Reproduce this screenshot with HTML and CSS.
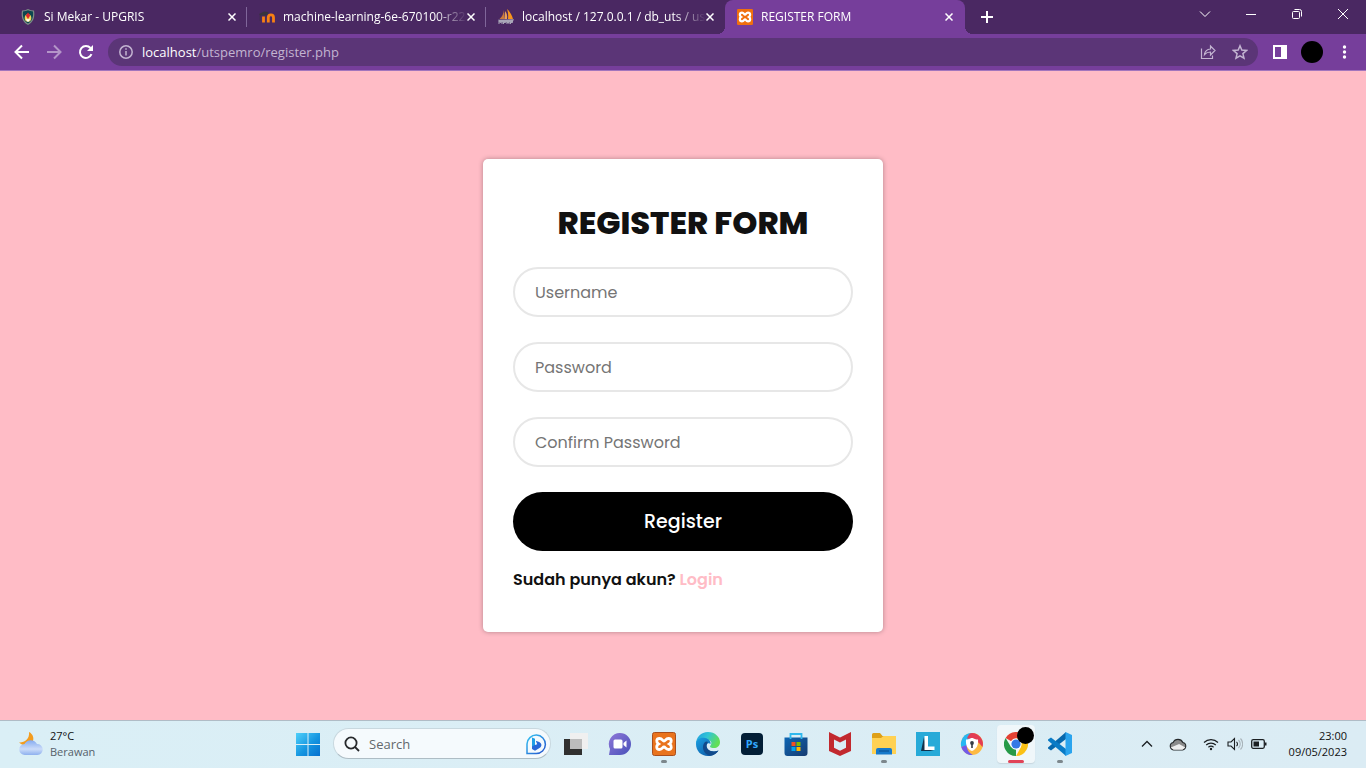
FILE: index.html
```html
<!DOCTYPE html>
<html lang="id">
<head>
<meta charset="utf-8">
<meta name="viewport" content="width=device-width, initial-scale=1">
<title>REGISTER FORM</title>
<link rel="stylesheet" href="styles.css">
</head>
<body>
<header class="browser">
  <div class="tab-strip">
    <div class="tab">
      <svg class="favicon" viewBox="0 0 16 16"><path d="M8 0C10 1 12 1.500 14 1.500 15 7 14 13 8 16 2 13 1 7 2 1.500 4 1.500 6 1 8 0z" fill="#7d8c86"/><path d="M8 1.300c2 .8 3.500 1.100 5 1.200.5 5-.5 9.500-5 12-4.500-2.500-5.500-7-5-12 1.500-.1 3-.4 5-1.200z" fill="#0d4650"/><ellipse cx="8" cy="9" rx="3.300" ry="3.800" fill="#f0d65a"/><path d="M8 3.500l2.200 3L8 10 5.800 6.500z" fill="#e0262b"/><path d="M6 9.500l2 1 2-1-1 3H7z" fill="#fff"/></svg>
      <span class="tab-title">Si Mekar - UPGRIS</span>
      <button class="tab-close" aria-label="Close tab"><svg viewBox="0 0 8 8"><path d="M.5.5l7 7m0-7l-7 7"/></svg></button>
    </div>
    <div class="tab">
      <svg class="favicon" viewBox="0 0 16 16"><path d="M4.500 13.500V7.500M9.300 13.500V8.500a2.600 2.600 0 015.200 0v5" fill="none" stroke="#f98012" stroke-width="2.800"/><path d="M0 5l5-2.500 4.500.5L8 6.500H1.500V12H.8V6z" fill="#38343d"/></svg>
      <span class="tab-title">machine-learning-6e-670100-r22</span>
      <button class="tab-close" aria-label="Close tab"><svg viewBox="0 0 8 8"><path d="M.5.5l7 7m0-7l-7 7"/></svg></button>
    </div>
    <div class="tab">
      <svg class="favicon" viewBox="0 0 16 16"><path d="M6 1v9H1.500C4 8 5.500 5 6 1z" fill="#c9793c"/><path d="M7 2c2 2 2.500 5 2 8H6.300z" fill="#e9a15a"/><path d="M9 0c3 2.500 5 6 6 10h-5C10.500 6 10 3 9 0z" fill="#f7941d"/><path d="M0 10.800l16-.5-1.500 3H1.500z" fill="#a9a6b8"/><path d="M1 15v-3l1.500 2L4 12v3m1.500 0v-3h2v1.500h-2M9 12v3m0-1.500h2M11 12v3m1.500 0v-3h2v1.500h-2" fill="none" stroke="#a9a6b8"/></svg>
      <span class="tab-title">localhost / 127.0.0.1 / db_uts / us</span>
      <button class="tab-close" aria-label="Close tab"><svg viewBox="0 0 8 8"><path d="M.5.5l7 7m0-7l-7 7"/></svg></button>
    </div>
    <div class="tab tab-active">
      <svg class="favicon" viewBox="0 0 24 24"><rect width="24" height="24" rx="2" fill="#f0700e"/><path d="M7.500 5.500c3 0 3 3 4.500 3s1.500-3 4.500-3c4 0 4 5 1.500 6.500 2.500 1.500 2.500 6.500-1.500 6.500-3 0-3-3-4.500-3s-1.500 3-4.500 3c-4 0-4-5-1.500-6.500-2.500-1.500-2.500-6.500 1.500-6.500z" fill="none" stroke="#fff" stroke-width="3.400"/></svg>
      <span class="tab-title">REGISTER FORM</span>
      <button class="tab-close" aria-label="Close tab"><svg viewBox="0 0 8 8"><path d="M.5.5l7 7m0-7l-7 7"/></svg></button>
    </div>
    <button class="new-tab" aria-label="New tab"><svg viewBox="0 0 12 12"><path d="M6 0v12M0 6h12"/></svg></button>
    <div class="window-controls">
      <button aria-label="Search tabs"><svg viewBox="0 0 12 12"><path d="M1 3.500l5 5 5-5"/></svg></button>
      <button aria-label="Minimize"><svg viewBox="0 0 12 12"><path d="M1 6.500h10"/></svg></button>
      <button aria-label="Restore"><svg viewBox="0 0 12 12"><rect x="1.500" y="3.500" width="7" height="7" rx="1"/><path d="M3.500 1.500h5a2 2 0 012 2v5"/></svg></button>
      <button aria-label="Close"><svg viewBox="0 0 12 12"><path d="M1 1l10 10M11 1L1 11"/></svg></button>
    </div>
  </div>
  <nav class="toolbar" aria-label="Browser toolbar">
    <button class="tool" aria-label="Back"><svg viewBox="0 0 16 16" fill="none" stroke="#fff" stroke-width="2"><path d="M15 8H2M8 1.500L1.500 8 8 14.500"/></svg></button>
    <button class="tool tool-dim" aria-label="Forward"><svg viewBox="0 0 16 16" fill="none" stroke="#fff" stroke-width="2"><path d="M1 8h13M8 1.500L14.500 8 8 14.500"/></svg></button>
    <button class="tool" aria-label="Reload"><svg viewBox="0 0 16 16" fill="none" stroke="#fff" stroke-width="2"><path d="M13.500 10.200A6 6 0 1112.500 4"/><path d="M15 1v6H9z" fill="#fff" stroke="none"/></svg></button>
    <div class="omnibox">
      <svg class="info" viewBox="0 0 14 14" fill="none" stroke="#c3b4d1" stroke-width="1.500"><circle cx="7" cy="7" r="6.200"/><path d="M7 6v4.500M7 3.300v1.500"/></svg>
      <span class="url"><span class="host">localhost</span>/utspemro/register.php</span>
      <button class="tool" aria-label="Share"><svg viewBox="0 0 16 16" fill="none" stroke="#c3b4d1" stroke-width="1.200"><path d="M1.500 4.500v10h11v-3"/><path d="M4.500 10.500C5 7 7 5.200 10.500 5V2l4.500 4.500-4.500 4.500V8C8 8 6 8.800 4.500 10.500z"/></svg></button>
      <button class="tool" aria-label="Bookmark"><svg viewBox="0 0 16 16" fill="none" stroke="#c3b4d1" stroke-width="1.500"><path d="M8 1.800l1.800 4.300 4.700.4-3.600 3.100 1.100 4.600L8 11.800l-4 2.400 1.100-4.600L1.500 6.500l4.700-.4z"/></svg></button>
    </div>
    <button class="tool" aria-label="Side panel"><svg viewBox="0 0 16 16"><path d="M1 1h14v14H1zM3 3v10h6V3z" fill="#fff" fill-rule="evenodd"/></svg></button>
    <button class="tool" aria-label="Profile"><span class="avatar"></span></button>
    <button class="tool" aria-label="Menu"><svg viewBox="0 0 16 16" fill="#fff"><circle cx="8.500" cy="3" r="1.700"/><circle cx="8.500" cy="8" r="1.700"/><circle cx="8.500" cy="13" r="1.700"/></svg></button>
  </nav>
</header>

<main class="page">
  <form class="card">
    <h1 class="card-title">REGISTER FORM</h1>
    <div class="fields">
      <input class="field" type="text" placeholder="Username" aria-label="Username">
      <input class="field" type="password" placeholder="Password" aria-label="Password">
      <input class="field" type="password" placeholder="Confirm Password" aria-label="Confirm Password">
      <button class="submit" type="button">Register</button>
    </div>
    <p class="login-line">Sudah punya akun? <a href="#login">Login</a></p>
  </form>
</main>

<footer class="taskbar">
  <div class="weather">
    <svg viewBox="0 0 26 26">
      <defs><linearGradient id="cloud" x1="0" y1="0" x2="0" y2="1"><stop offset="0" stop-color="#83aaf0"/><stop offset=".6" stop-color="#cbdcf9"/><stop offset="1" stop-color="#8eb0ee"/></linearGradient></defs>
      <path d="M11 1c4 2 5.500 6.500 3.500 10S6 16 1 11.500C6 12 12 8 11 1z" fill="#f39c1e"/>
      <path d="M7 24a5.500 5.500 0 01-.5-11A7 7 0 0119 13a5.500 5.500 0 01.5 11z" fill="url(#cloud)"/>
    </svg>
    <div class="weather-text"><span>27°C</span><span class="muted">Berawan</span></div>
  </div>

  <div class="apps">
    <button class="app" aria-label="Start"><svg viewBox="0 0 24 24"><defs><linearGradient id="win" x1="0" y1="0" x2="1" y2="1"><stop offset="0" stop-color="#4fd0fa"/><stop offset=".55" stop-color="#1595e0"/><stop offset="1" stop-color="#0670cf"/></linearGradient></defs><path d="M0 1h11.500v11H0zM12.500 1H24v11H12.500zM0 13h11.500v11H0zM12.500 13H24v11H12.500z" fill="url(#win)"/></svg></button>
    <label class="search">
      <svg class="lens" viewBox="0 0 16 16" fill="none" stroke="#26282b" stroke-width="1.800"><circle cx="7" cy="7" r="5.600"/><path d="M11 11l4 4"/></svg>
      <input type="text" placeholder="Search" aria-label="Search">
      <svg class="bing" viewBox="0 0 22 22"><defs><linearGradient id="bing" x1="0" y1="0" x2="1" y2="1"><stop offset="0" stop-color="#35c5f3"/><stop offset="1" stop-color="#2450cb"/></linearGradient></defs><path d="M2 20.500V11a9.200 9.200 0 119 9.500z" fill="none" stroke="url(#bing)" stroke-width="1.500"/><path d="M7 4.500l3 1.300v8.400L7 16z" fill="#1f9fe6"/><path d="M7 13.500l3-1.500 2.200-.8-1.400-3.400 3.400 1.300c3.200 1.700 2.600 4.700.3 6L10 17.800 7 16z" fill="#2767d8"/></svg>
    </label>
    <button class="app" aria-label="Task view"><svg viewBox="0 0 24 24"><path d="M0 7h18v16H0z" fill="#30302f"/><path d="M6 1h18v16H6z" fill="#f0f0f0"/><path d="M6 7h12v10H6z" fill="#bcbcbc"/></svg></button>
    <button class="app" aria-label="Chat"><svg viewBox="0 0 24 24"><defs><linearGradient id="chat" x1="0" y1="0" x2="1" y2="1"><stop offset="0" stop-color="#8f78d8"/><stop offset="1" stop-color="#4850b9"/></linearGradient></defs><path d="M12 1a11 11 0 010 22H1l1-6A11 11 0 0112 1z" fill="url(#chat)"/><rect x="5.500" y="7.500" width="9" height="9" rx="1.500" fill="#fff"/><path d="M15.500 11l3-2.500v7l-3-2.500z" fill="#fff"/></svg></button>
    <button class="app running" aria-label="XAMPP"><svg viewBox="0 0 24 24"><rect x=".5" y=".5" width="23" height="23" rx="2" fill="#e9731d" stroke="#a94e1d"/><path d="M7.500 6.500c3 0 3 2.500 4.500 2.500s1.500-2.500 4.500-2.500c3.500 0 3.500 4 1 5.500 2.500 1.500 2.500 5.500-1 5.500-3 0-3-2.500-4.500-2.500s-1.500 2.500-4.500 2.500c-3.500 0-3.500-4-1-5.500-2.500-1.500-2.500-5.500 1-5.500z" fill="none" stroke="#fff" stroke-width="2.800"/></svg></button>
    <button class="app" aria-label="Edge"><svg viewBox="0 0 24 24"><defs><linearGradient id="edgeTop" x1="0" y1="0" x2="1" y2=".4"><stop offset="0" stop-color="#1e9ae0"/><stop offset=".5" stop-color="#32c5d5"/><stop offset="1" stop-color="#62df56"/></linearGradient><linearGradient id="edgeLow" x1="0" y1="0" x2="1" y2="1"><stop offset="0" stop-color="#1aa0e2"/><stop offset="1" stop-color="#0c4d9c"/></linearGradient></defs><path d="M0 12C0 5 5 0 12 0s12 5 12 10c0 4-3 6-6 6-4 0-4.500-1.500-3.500-2.500C17 10 14 7.500 10 7.500 5 7.500 1 9 0 12z" fill="url(#edgeTop)"/><path d="M0 12c0-4 4-7 9-6 4 .7 6 3.500 5.500 6C10 8.500 7 20 18.500 19.500c2 0 3.500-1 4-1C20.500 22 16 24 12 24 5 24 0 19 0 12z" fill="url(#edgeLow)"/><path d="M9 10c-4 4-2 12 5 13.800C18 23.500 21 21 22.500 18.500c-8 3.500-15-3-10.500-8.500-1-.7-2-.7-3 0z" fill="#114a8b"/></svg></button>
    <button class="app" aria-label="Photoshop"><svg viewBox="0 0 24 24"><rect x="1" y="1" width="22" height="22" rx="4" fill="#021e36"/><text class="ps-mark" x="12" y="16" text-anchor="middle">Ps</text></svg></button>
    <button class="app" aria-label="Store"><svg viewBox="0 0 24 24"><defs><linearGradient id="bag" x1="0" y1="0" x2="1" y2="1"><stop offset="0" stop-color="#0d66b4"/><stop offset="1" stop-color="#173b70"/></linearGradient></defs><path d="M.5 5.500h23V21a3 3 0 01-3 3h-17a3 3 0 01-3-3z" fill="url(#bag)"/><path d="M6.500 7V2h11v5" fill="none" stroke="#2fb8ed" stroke-width="1.800"/><path d="M7.500 10h4v4h-4z" fill="#f25022"/><path d="M12.500 10h4v4h-4z" fill="#7fba00"/><path d="M7.500 15h4v4h-4z" fill="#00a4ef"/><path d="M12.500 15h4v4h-4z" fill="#ffb900"/></svg></button>
    <button class="app" aria-label="McAfee"><svg viewBox="0 0 24 24"><path d="M1 0l11 5.500L23 0v19l-11 5-11-5zM6 7.500v8.300l6 3 6-3V7.500l-6 3z" fill="#c2292e" fill-rule="evenodd"/></svg></button>
    <button class="app running" aria-label="File Explorer"><svg viewBox="0 0 24 24"><path d="M0 2.500A1.500 1.500 0 011.500 1H8l2.500 3H22a2 2 0 012 2v16H0z" fill="#dea018"/><path d="M0 6h9l2.500-2H24v18H0z" fill="#ffd153"/><path d="M4 22.500V18a2 2 0 012-2h12a2 2 0 012 2v4.500z" fill="#1679ca"/><path d="M7 19h10" stroke="#0d559b" stroke-width="1.300"/></svg></button>
    <button class="app" aria-label="L"><svg viewBox="0 0 24 24"><path d="M0 0h24v24H0z" fill="#27aad8"/><path d="M8 5L5 19h9l4-1-8-3z" fill="#11334c"/><path d="M8.500 4H12v10.500h6.500V18h-10z" fill="#fff"/></svg></button>
    <button class="app" aria-label="Secure browser"><svg viewBox="0 0 24 24"><circle cx="12" cy="12" r="11" fill="#fdba42"/><path d="M12 12L1.300 15A11 11 0 0112 1z" fill="#27b8f3"/><path d="M12 1a11 11 0 0110.500 14C19 11 17 7 7 6.500 8 3 10 1 12 1z" fill="#e33c54"/><path d="M1.300 15c1.500 5 6 8.500 11.500 8C9 21 7 18 6.500 13z" fill="#725be8"/><path d="M6 7.500c4 0 4-1.500 6-1.500s2 1.500 6 1.500c.5 5-1 9.500-6 11.500-5-2-6.500-6.500-6-11.500z" fill="#fff"/><circle cx="12" cy="11" r="1.900" fill="#343b45"/><path d="M11.200 11h1.600v5h-1.600z" fill="#343b45"/></svg></button>
    <button class="app running current" aria-label="Chrome"><svg viewBox="0 0 24 24"><path d="M12 12L1.600 6a12 12 0 0120.800 0z" fill="#e34133"/><path d="M12 12v12A12 12 0 011.600 6L7 15z" fill="#269a48"/><path d="M12 6h10.400a12 12 0 01-10.400 18l5-9z" fill="#fbc116"/><circle cx="12" cy="12" r="5.700" fill="#fff"/><circle cx="12" cy="12" r="4.600" fill="#3478e5"/></svg><span class="badge"></span></button>
    <button class="app running" aria-label="Visual Studio Code"><svg viewBox="0 0 24 24"><path d="M18 0v7L3 18.500 0 16.500v-1z" fill="#0768ad"/><path d="M0 8.500v-1l3-2L18 17v7z" fill="#0a7bc6"/><path d="M17.500 0L24 3v18l-6.500 3z" fill="#2aa4ee"/></svg></button>
  </div>

  <div class="tray">
    <svg class="tray-up" viewBox="0 0 12 12" fill="none" stroke="#1b1f22" stroke-width="1.300"><path d="M1 8.500l5-5 5 5"/></svg>
    <svg class="tray-cloud" viewBox="0 0 16 16"><path d="M4 13.200a3.300 3.300 0 01-.3-6.500 4.700 4.700 0 018.600 0 3.300 3.300 0 01-.3 6.500z" fill="#8b8b8b" stroke="#25282a"/><path d="M1.500 11L9 8l5.500 3-2.500 2H4z" fill="#eee"/></svg>
    <div class="status">
      <svg viewBox="0 0 16 16" fill="none" stroke="#1b1f22" stroke-width="1.200"><path d="M1 6.500a10 10 0 0114 0M3.200 9a7 7 0 019.600 0M5.400 11.300a4 4 0 015.200 0"/><circle cx="8" cy="13" r="1.200" fill="#1b1f22" stroke="none"/></svg>
      <svg viewBox="0 0 16 16" fill="none" stroke="#1b1f22" stroke-width="1.100"><path d="M1 6h3l3.500-3.500v11L4 10H1z"/><path d="M9.500 5.800a3 3 0 010 4.400"/><path d="M11.500 4a5.500 5.500 0 010 8M13.500 2.500a8 8 0 010 11" stroke="#a8b3b9"/></svg>
      <svg viewBox="0 0 16 16"><rect x=".7" y="3.700" width="12.600" height="8.600" rx="1.500" fill="none" stroke="#1b1f22" stroke-width="1.300"/><path d="M2.500 5.500H8v5H2.500zM14 6.500h1.500v3H14z" fill="#1b1f22"/></svg>
    </div>
    <div class="clock"><span>23:00</span><span>09/05/2023</span></div>
  </div>
</footer>
</body>
</html>
```
FILE: styles.css
```css
* {
  box-sizing: border-box;
}

body {
  margin: 0;
  min-height: 100vh;
  display: flex;
  flex-direction: column;
  font-family: "Segoe UI", "Open Sans", "Noto Sans", sans-serif;
  font-size: 12px;
  color: #111;
}

button {
  border: 0;
  padding: 0;
  background: none;
  font: inherit;
  color: inherit;
  display: flex;
  align-items: center;
  justify-content: center;
}

svg {
  display: block;
  flex: none;
}

/* Browser frame */
.browser {
  color: #fff;
  background: #763e9b;
  border-bottom: 1px solid #a275bd;
}

.tab-strip {
  display: flex;
  height: 34px;
  padding-left: 8px;
  background: #4a2862;
}

.tab {
  flex: 0 1 239px;
  min-width: 0;
  display: flex;
  align-items: center;
  padding: 0 11px 0 12px;
  background: linear-gradient(#80669a, #80669a) right center / 1px 20px no-repeat;
}

.tab:nth-child(3) {
  background: none;
}

.tab-active {
  position: relative;
  flex-basis: 240px;
  padding-right: 12px;
  background: #763e9b;
  border-radius: 8px 8px 0 0;
}

.tab-active::before,
.tab-active::after {
  content: "";
  position: absolute;
  bottom: 0;
  width: 8px;
  height: 8px;
}

.tab-active::before {
  right: 100%;
  background: radial-gradient(circle at 0 0, #4a2862 8px, #763e9b 8px);
}

.tab-active::after {
  left: 100%;
  background: radial-gradient(circle at 100% 0, #4a2862 8px, #763e9b 8px);
}

.favicon {
  width: 16px;
  height: 16px;
}

.tab-title {
  flex: 1;
  min-width: 0;
  margin-left: 8px;
  line-height: 16px;
  white-space: nowrap;
  mask-image: linear-gradient(to left, transparent, #000 32px);
}

.tab-close svg {
  width: 8px;
  height: 8px;
  fill: none;
  stroke: #fff;
  stroke-width: 1.5;
}

.new-tab {
  width: 28px;
  margin-left: 8px;
}

.new-tab svg {
  width: 12px;
  height: 12px;
  stroke: #fff;
  stroke-width: 2;
}

.window-controls {
  display: flex;
  margin-left: auto;
  height: 28px;
}

.window-controls button {
  width: 46px;
}

.window-controls svg {
  width: 12px;
  height: 12px;
  fill: none;
  stroke: #fff;
}

.toolbar {
  display: flex;
  align-items: center;
  height: 36px;
  padding: 0 6px;
}

.tool {
  width: 32px;
  height: 28px;
}

.tool svg {
  width: 16px;
  height: 16px;
}

.tool-dim {
  opacity: 0.45;
}

.omnibox {
  flex: 1;
  display: flex;
  align-items: center;
  height: 28px;
  margin: 0 6px;
  padding: 0 2px 0 11px;
  border-radius: 14px;
  background: #5b3577;
}

.info {
  width: 14px;
  height: 14px;
}

.url {
  flex: 1;
  margin-left: 9px;
  font-size: 13px;
  color: #c3b4d1;
}

.host {
  color: #fff;
}

.avatar {
  width: 22px;
  height: 22px;
  border-radius: 50%;
  background: #000;
}

/* Register page */
.page {
  flex: 1;
  display: flex;
  align-items: center;
  justify-content: center;
  background: #ffbcc6;
  font-family: Poppins, Inter, sans-serif;
}

.card {
  width: 400px;
  max-width: 100%;
  padding: 40px 30px;
  border-radius: 5px;
  background: #fff;
  box-shadow: 0 0 5px rgba(0, 0, 0, 0.3);
}

.card-title {
  margin: 0 0 20px;
  font-size: 32px;
  line-height: 48px;
  font-weight: 800;
  text-align: center;
  white-space: nowrap;
}

.fields {
  display: grid;
  gap: 25px;
}

.field {
  width: 100%;
  height: 50px;
  padding: 0 20px;
  border: 2px solid #e7e7e7;
  border-radius: 25px;
  font: inherit;
  font-size: 16px;
}

.field::placeholder {
  color: #757575;
}

.submit {
  height: 59px;
  border-radius: 30px;
  background: #000;
  color: #fff;
  font-size: 19px;
  font-weight: 500;
}

.login-line {
  margin: 17px 0 0;
  font-size: 16px;
  line-height: 24px;
  font-weight: 600;
}

.login-line a {
  color: #ffbcc6;
  text-decoration: none;
}

/* Taskbar */
.taskbar {
  display: grid;
  grid-template-columns: 1fr auto 1fr;
  align-items: center;
  height: 48px;
  padding-bottom: 2px;
  border-top: 1px solid #b0bcc6;
  background: linear-gradient(90deg, #daeff6, #dbecf4);
}

.weather {
  display: flex;
  align-items: center;
  gap: 6px;
  padding-left: 18px;
}

.weather svg {
  width: 26px;
  height: 26px;
}

.weather-text,
.clock {
  display: flex;
  flex-direction: column;
  font-size: 11px;
  line-height: 16px;
}

.muted {
  color: #56616a;
}

.apps {
  display: flex;
  align-items: center;
  padding-left: 2px;
}

.app {
  position: relative;
  width: 44px;
  height: 45px;
}

.app svg {
  position: relative;
  width: 24px;
  height: 24px;
}

.running::after {
  content: "";
  position: absolute;
  bottom: 3px;
  left: 50%;
  width: 6px;
  height: 3px;
  border-radius: 2px;
  background: #7d878c;
  transform: translateX(-50%);
}

.current::before {
  content: "";
  position: absolute;
  inset: 4px 3px 3px;
  border-radius: 4px;
  background: #f0f7fa;
  box-shadow: 0 1px 1px #c7d7df;
}

.current::after {
  width: 16px;
  background: #e14458;
}

.badge {
  position: absolute;
  top: 6px;
  right: 4px;
  width: 17px;
  height: 17px;
  border-radius: 50%;
  background: #000;
}

.ps-mark {
  font: bold 11px "Open Sans", sans-serif;
  fill: #31a8ff;
}

.search {
  display: flex;
  align-items: center;
  width: 218px;
  height: 31px;
  margin: 0 3px;
  padding: 0 3px 0 10px;
  border: 1px solid #c8d8df;
  border-bottom-color: #aebdc5;
  border-radius: 16px;
  background: #f5fafd;
}

.lens {
  width: 16px;
  height: 16px;
}

.search input {
  flex: 1;
  min-width: 0;
  margin-left: 9px;
  padding: 0;
  border: 0;
  background: none;
  font: inherit;
  font-size: 13px;
}

.search input::placeholder {
  color: #62686c;
}

.bing {
  width: 22px;
  height: 22px;
}

.tray {
  display: flex;
  align-items: center;
  justify-content: flex-end;
  gap: 16px;
  padding-right: 19px;
}

.tray-up {
  width: 12px;
  height: 12px;
}

.tray-cloud {
  width: 18px;
  height: 18px;
}

.status {
  display: flex;
  gap: 8px;
}

.status svg {
  width: 16px;
  height: 16px;
}

.clock {
  min-width: 64px;
  text-align: right;
}
```
